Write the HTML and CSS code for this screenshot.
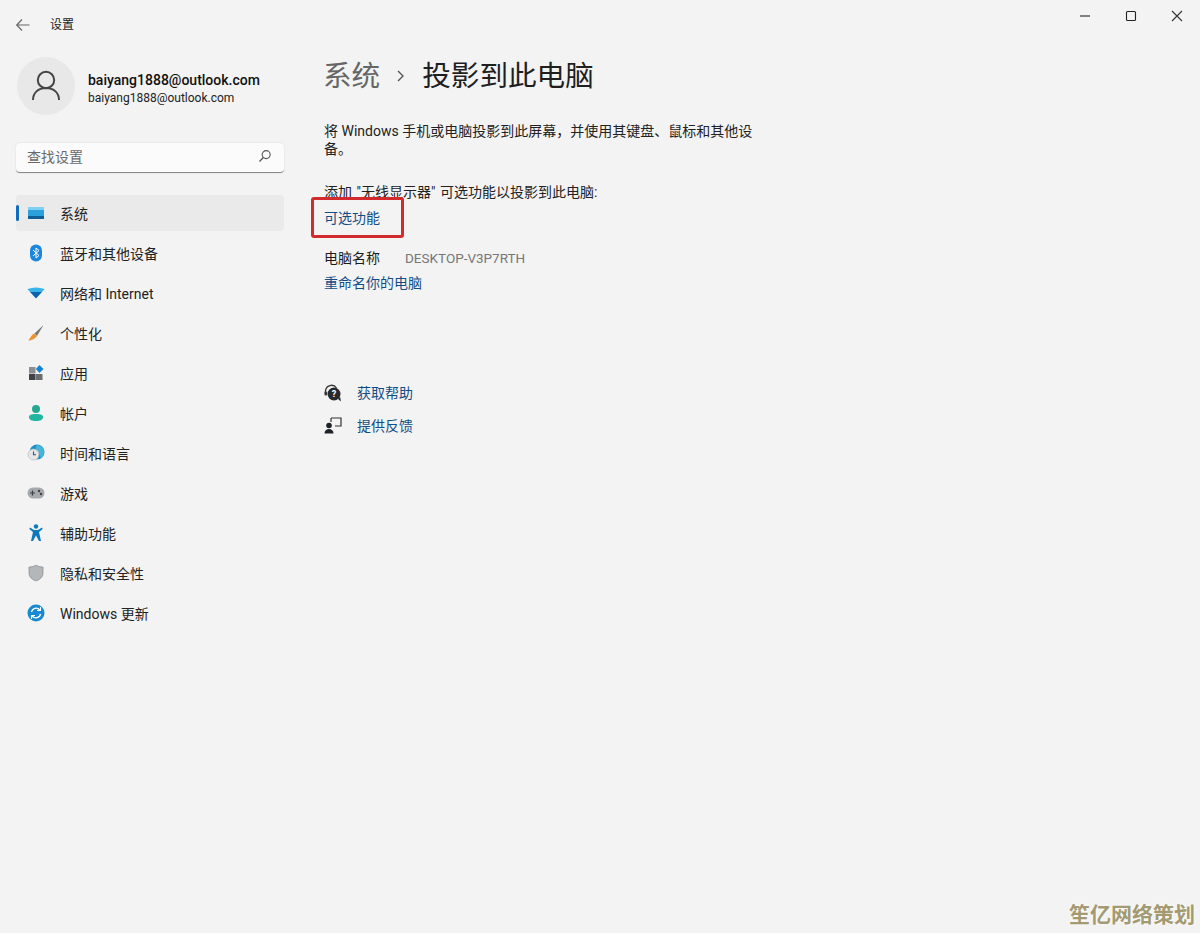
FILE: index.html
```html
<!DOCTYPE html>
<html lang="zh-CN">
<head>
<meta charset="utf-8">
<title>设置</title>
<link rel="stylesheet" href="styles.css">
</head>
<body>
<div class="window">
  <aside class="sidebar">
    <div class="titlebar">
      <svg class="back" width="16" height="14" viewBox="0 0 16 14"><path d="M14.5 7H2M7 1.5 1.7 7 7 12.5" fill="none" stroke="#666" stroke-width="1.2"/></svg>
      <span class="apptitle">设置</span>
    </div>
    <div class="profile">
      <div class="avatar">
        <svg width="30" height="32" viewBox="0 0 30 32"><circle cx="15" cy="10" r="8.2" fill="none" stroke="#444" stroke-width="2"/><path d="M2 30c0-7 5-12 13-12s13 5 13 12" fill="none" stroke="#444" stroke-width="2"/></svg>
      </div>
      <div class="who">
        <div class="name">baiyang1888@outlook.com</div>
        <div class="mail">baiyang1888@outlook.com</div>
      </div>
    </div>
    <div class="search">
      <span>查找设置</span>
      <svg width="14" height="14" viewBox="0 0 14 14"><circle cx="8.2" cy="5.6" r="4" fill="none" stroke="#555" stroke-width="1.1"/><path d="M5.3 8.5 1.5 12.5" stroke="#555" stroke-width="1.2"/></svg>
    </div>
    <nav class="nav">
      <a class="item active">
        <svg width="18" height="14" viewBox="0 0 18 14"><rect x="1" y="1" width="16" height="11" fill="#2aa0dc"/><rect x="1" y="1" width="16" height="3" fill="#7fd0f0"/><rect x="1" y="10" width="16" height="3" fill="#0f5f96"/></svg>
        <span>系统</span>
      </a>
      <a class="item">
        <svg width="14" height="18" viewBox="0 0 14 18"><rect x="1" y="0.5" width="12" height="17" rx="6" fill="#1b86dc"/><path d="M4 6l6 5.5-3 2.5V4l3 2.5L4 12" fill="none" stroke="#fff" stroke-width="1"/></svg>
        <span>蓝牙和其他设备</span>
      </a>
      <a class="item">
        <svg width="18" height="12" viewBox="0 0 18 12"><path d="M0.500 2Q9-1 17.500 2L15 5H3z" fill="#37b4e8"/><path d="M3 5h12L9 11.500z" fill="#0b62b0"/></svg>
        <span>网络和 Internet</span>
      </a>
      <a class="item">
        <svg width="18" height="18" viewBox="0 0 18 18"><path d="M16.500 1 7.500 9.500l2.500 2.500z" fill="#77787a"/><path d="M7.500 9.500c-3 1-4 4-6 7 3 0 7-2 8.500-4.500z" fill="#ec9335"/></svg>
        <span>个性化</span>
      </a>
      <a class="item">
        <svg width="16" height="16" viewBox="0 0 16 16"><rect x="1" y="2" width="6.500" height="6.500" fill="#8c8f92"/><rect x="1" y="9" width="6.500" height="6" fill="#3f4347"/><rect x="8" y="9" width="6.500" height="6" fill="#6a6e72"/><path d="M11.500 0 15.500 4 11.500 8 7.800 4z" fill="#1583cf"/></svg>
        <span>应用</span>
      </a>
      <a class="item">
        <svg width="16" height="17" viewBox="0 0 16 17"><circle cx="8" cy="4.500" r="4" fill="#24a892"/><path d="M1 12.500C1 10.500 3 9.500 8 9.500s7 1 7 3c0 3-3 4-7 4s-7-1-7-4z" fill="#1fb5a0"/></svg>
        <span>帐户</span>
      </a>
      <a class="item">
        <svg width="18" height="18" viewBox="0 0 18 18"><circle cx="10" cy="8" r="7.500" fill="#1d8fc9"/><path d="M10 1c4 0 7 3 7 7s-2 6-4 7c1-3 0-4-2-6s-3-5-1-8z" fill="#46b5d8"/><circle cx="6.500" cy="10.500" r="5.500" fill="#e6e6e6" stroke="#b5b5b5" stroke-width=".6"/><path d="M6.500 7.500v3.300h2.500" fill="none" stroke="#1b5f8a" stroke-width="1.100"/></svg>
        <span>时间和语言</span>
      </a>
      <a class="item">
        <svg width="18" height="12" viewBox="0 0 18 12"><rect x="0.500" y="0.500" width="17" height="11" rx="5.500" fill="#a6aaae"/><path d="M3 6h5M5.500 3.500v5" stroke="#3d4145" stroke-width="1.200"/><circle cx="12" cy="4" r="1.200" fill="#3d4145"/><circle cx="14" cy="7" r="1.200" fill="#3d4145"/></svg>
        <span>游戏</span>
      </a>
      <a class="item">
        <svg width="14" height="18" viewBox="0 0 14 18"><circle cx="7" cy="2.500" r="2.200" fill="#0e78b8"/><path d="M1 3.500 5 6h4l4-2.500.7 1.500L10 8l2 9h-2L7 11.500 4 17H2l2-9L.3 5z" fill="#0e78b8"/></svg>
        <span>辅助功能</span>
      </a>
      <a class="item">
        <svg width="16" height="17" viewBox="0 0 16 17"><path d="M8 .5c2 1.500 4.500 2 7 2v6c0 4-3 6.500-7 8-4-1.500-7-4-7-8v-6c2.500 0 5-.5 7-2z" fill="#b4b7ba" stroke="#8b8f93" stroke-width=".8"/></svg>
        <span>隐私和安全性</span>
      </a>
      <a class="item">
        <svg width="18" height="18" viewBox="0 0 18 18"><circle cx="9" cy="9" r="8.500" fill="#1a8ad0"/><path d="M4.500 8a4.700 4.700 0 0 1 8.300-2M13.500 10a4.700 4.700 0 0 1-8.300 2" fill="none" stroke="#fff" stroke-width="1.300"/><path d="M13.500 3v3.500H10M4.500 15v-3.500H8" fill="none" stroke="#fff" stroke-width="1.100"/></svg>
        <span>Windows 更新</span>
      </a>
    </nav>
  </aside>
  <main class="main">
    <div class="controls">
      <svg width="12" height="12" viewBox="0 0 12 12"><path d="M1 6h10" stroke="#222" stroke-width="1.100"/></svg>
      <svg width="12" height="12" viewBox="0 0 12 12"><rect x="1.500" y="1.500" width="9" height="9" rx="1" fill="none" stroke="#222" stroke-width="1.100"/></svg>
      <svg width="12" height="12" viewBox="0 0 12 12"><path d="M1 1l10 10M11 1 1 11" stroke="#333" stroke-width="1.100"/></svg>
    </div>
    <h1 class="crumb">
      <span class="parent">系统</span>
      <svg class="chev" width="10" height="14" viewBox="0 0 10 14"><path d="M2 2l5 5-5 5" fill="none" stroke="#555" stroke-width="1.400"/></svg>
      <span>投影到此电脑</span>
    </h1>
    <p class="lead">将 Windows 手机或电脑投影到此屏幕，并使用其键盘、鼠标和其他设备。</p>
    <p class="add">添加 "无线显示器" 可选功能以投影到此电脑:</p>
    <div class="optional">
      <a class="link">可选功能</a>
      <div class="redbox"></div>
    </div>
    <div class="pc"><span>电脑名称</span><span class="pcname">DESKTOP-V3P7RTH</span></div>
    <a class="link rename">重命名你的电脑</a>
    <div class="help">
      <div class="helprow">
        <svg width="18" height="18" viewBox="0 0 18 18"><path d="M1.500 9V7a6 6 0 0 1 11-3" fill="none" stroke="#333" stroke-width="1.300"/><circle cx="10" cy="10" r="6.500" fill="#262a2e"/><path d="M14 15l3 2.500-1-5z" fill="#262a2e"/><rect x="0.500" y="7.500" width="2.500" height="4" rx="1" fill="#333"/><text class="q" x="10" y="13">?</text></svg>
        <a class="link">获取帮助</a>
      </div>
      <div class="helprow">
        <svg width="18" height="18" viewBox="0 0 18 18"><path d="M7 1h10v8h-6" fill="none" stroke="#333" stroke-width="1.200"/><path d="M7 1v4" stroke="#333" stroke-width="1.200"/><circle cx="5" cy="8.500" r="2.800" fill="#1f2327"/><path d="M0.500 16.500c0-3 2-4.500 4.500-4.500s4.500 1.500 4.500 4.500z" fill="#1f2327"/></svg>
        <a class="link">提供反馈</a>
      </div>
    </div>
  </main>
  <div class="watermark">笙亿网络策划</div>
</div>
</body>
</html>
```
FILE: styles.css
```css
* { box-sizing: border-box; }
html, body { margin: 0; height: 100%; }
body {
  background: #f3f3f3;
  color: #1b1b1b;
  font-family: Roboto, "Noto Sans CJK SC", sans-serif;
  font-size: 14px;
  overflow: hidden;
}
.window {
  position: relative;
  display: grid;
  grid-template-columns: 324px 1fr;
  height: 933px;
}
.sidebar { padding-left: 16px; width: 284px; }
.titlebar {
  display: flex;
  align-items: center;
  height: 48px;
  padding-top: 1px;
}
.back { margin-left: -1px; margin-right: 19px; }
.apptitle { font-size: 12px; line-height: 16px; }
.profile {
  display: flex;
  align-items: center;
  gap: 13px;
  height: 60px;
  margin-top: 8px;
  margin-left: 1px;
}
.avatar {
  width: 58px;
  height: 58px;
  border-radius: 50%;
  background: #e8e8e8;
  display: flex;
  align-items: center;
  justify-content: center;
}
.who { padding-top: 6px; }
.name { font-size: 14px; font-weight: 500; line-height: 18px; color: #111; }
.mail { font-size: 12px; line-height: 18px; color: #222; }
.search {
  display: flex;
  align-items: center;
  justify-content: space-between;
  height: 30px;
  margin-top: 27px;
  padding: 0 12px 3px 11px;
  background: #fbfbfb;
  border-radius: 4px;
  border-bottom: 1px solid #8a8a8a;
  box-shadow: 0 0 2px rgba(0,0,0,.12);
  color: #6a6a6a;
  font-size: 14px;
}
.nav {
  display: flex;
  flex-direction: column;
  gap: 4px;
  margin-top: 22px;
}
.item {
  position: relative;
  display: flex;
  align-items: center;
  height: 36px;
  padding-left: 44px;
  border-radius: 4px;
  font-size: 14px;
  color: #222;
}
.item svg {
  position: absolute;
  left: 20px;
  top: 50%;
  transform: translate(-50%, -50%);
}
.item.active { background: #eaeaea; }
.item.active::before {
  content: "";
  position: absolute;
  left: 0;
  top: 10px;
  width: 3px;
  height: 16px;
  border-radius: 2px;
  background: #0f6cbd;
}
.main { position: relative; padding-top: 58px; }
.controls {
  position: absolute;
  top: 10px;
  right: 17px;
  display: flex;
  gap: 34px;
}
.crumb {
  display: flex;
  align-items: center;
  height: 36px;
  margin: 0;
  font-size: 28.600px;
  line-height: 36px;
  font-weight: 400;
  color: #1f1f1f;
}
.parent { color: #666; margin-left: -1px; }
.chev { margin: 0 16px 0 16px; }
.lead {
  width: 432px;
  margin: 28px 0 0;
  line-height: 18px;
  color: #222;
}
.add { margin: 25px 0 0; line-height: 18px; color: #222; word-spacing: 1px; }
.optional { position: relative; margin-top: 8px; height: 18px; line-height: 18px; }
.link { color: #124d85; font-size: 14px; line-height: 18px; }
.redbox {
  position: absolute;
  left: -13px;
  top: -12px;
  width: 93px;
  height: 41px;
  border: 3px solid #d32a2e;
  border-radius: 3px;
}
.pc { display: flex; margin-top: 22px; line-height: 18px; }
.pcname { margin-left: 25px; color: #777; font-size: 13.500px; }
.rename { display: block; margin-top: 7px; }
.help {
  display: flex;
  flex-direction: column;
  gap: 15px;
  margin-top: 92px;
}
.helprow { display: flex; align-items: center; gap: 15px; height: 18px; }
.q { fill: #fff; font-size: 9px; font-weight: 700; text-anchor: middle; }
.watermark {
  position: absolute;
  right: 5px;
  bottom: 4px;
  font-size: 21px;
  line-height: 28px;
  font-weight: 700;
  color: #a39a72;
  text-shadow: 0 0 3px #fff;
}
```
